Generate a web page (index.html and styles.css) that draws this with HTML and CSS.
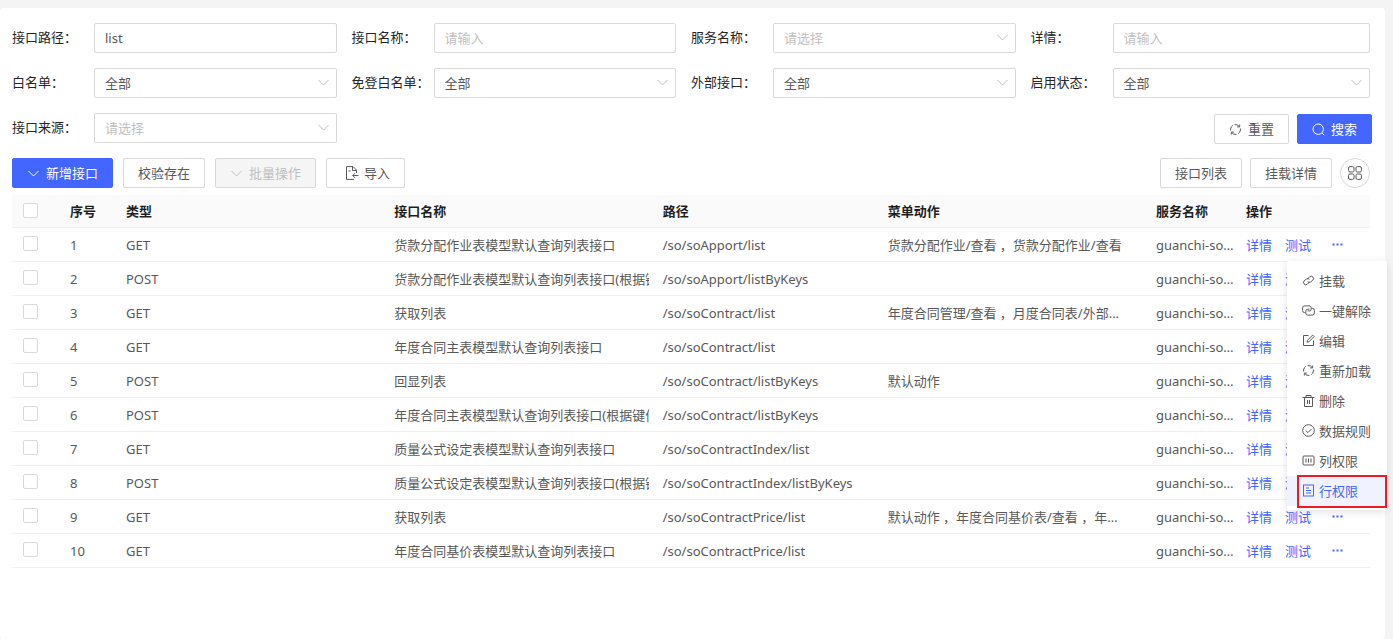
FILE: index.html
```html
<!DOCTYPE html>
<html lang="zh-CN">
  <head>
    <meta charset="UTF-8" />
    <meta name="viewport" content="width=device-width, initial-scale=1.0" />
    <title>接口管理</title>
    <link rel="stylesheet" href="styles.css">
  </head>
  <body>
    <svg class="sprite" aria-hidden="true">
      <symbol id="i-down" viewBox="0 0 13 13"><path d="M1.5 4l5 5 5-5" /></symbol>
      <symbol id="i-reload" viewBox="0 0 13 13"><path d="M1.600 5.800a5 5 0 0 1 2.200-3.400M5.600 1.600a5 5 0 0 1 4.700 1.800M8.200 3.900h2.500V1.500M11.400 7.200a5 5 0 0 1-2.200 3.400M7.400 11.400a5 5 0 0 1-4.700-1.800M4.800 9.100H2.300v2.400M1.600 5.500v2M11.400 5.500v2" /></symbol>
      <symbol id="i-search" viewBox="0 0 13 13"><circle cx="6.2" cy="6.2" r="5.2" /><path d="M10 10l2.3 2.3" /></symbol>
      <symbol id="i-import" viewBox="0 0 14 14"><path d="M9 13.400H1.500V.600h6.500l3.500 3.500v2.900M7.500.800v3.700h3.800M3.500 5h2M13.500 9.500H7.800M10 7.200L7.700 9.500l2.300 2.300" /></symbol>
      <symbol id="i-grid" viewBox="0 0 14 14"><rect x=".6" y=".6" width="5.4" height="5.4" rx="1.4" /><rect x="8" y=".6" width="5.4" height="5.4" rx="1.4" /><rect x=".6" y="8" width="5.4" height="5.4" rx="1.4" /><rect x="8" y="8" width="5.4" height="5.4" rx="1.4" /></symbol>
      <symbol id="i-link" viewBox="0 0 13 13"><path d="M5.4 4.900l2.300-2a2.200 2.200 0 0 1 3.300.2 2.200 2.200 0 0 1-.2 3.100L8.600 8a2.200 2.200 0 0 1-3-.4M7.600 8.100l-2.300 2a2.200 2.200 0 0 1-3.300-.2 2.200 2.200 0 0 1 .2-3.100L4.400 5a2.200 2.200 0 0 1 3 .4" /></symbol>
      <symbol id="i-unlink" viewBox="0 0 13 13"><path d="M3.200 8.600h-.6a2 2 0 0 1-2-2V3.900a2 2 0 0 1 2-2h4.600a2 2 0 0 1 2 2v1.300a1.700 1.700 0 0 1-1.700 1.700H5.600M9.800 4.400h.6a2 2 0 0 1 2 2v2.700a2 2 0 0 1-2 2H5.800a2 2 0 0 1-2-2V7.200a2 2 0 0 1 2-2h1.600" /></symbol>
      <symbol id="i-edit" viewBox="0 0 13 13"><path d="M6.5 1.500H1.500v10h10V6.500M5 8.200l.4-1.900 5.300-5.200 1.400 1.400-5.200 5.300z" /></symbol>
      <symbol id="i-trash" viewBox="0 0 13 13"><path d="M.5 3.500h12M4 3.500v-2h5v2M2.500 3.500v9h8v-9M5.500 6v4M7.500 6v4" /></symbol>
      <symbol id="i-check" viewBox="0 0 13 13"><circle cx="6.5" cy="6.5" r="5.8" /><path d="M3.700 6.500l2.200 2.100 3.800-3.800" /></symbol>
      <symbol id="i-column" viewBox="0 0 13 13"><rect x="1" y="2" width="11" height="9" rx="1" /><path d="M4 4.500v4M6.500 4.500v4M9 4.500v4" /></symbol>
      <symbol id="i-row" viewBox="0 0 13 13"><rect x="1.500" y="1" width="10" height="11" /><path d="M4 4h3M4 6.500h5M4 9h5" /></symbol>
      <symbol id="i-more" viewBox="0 0 13 13"><path d="M1.500 5.500h2v2h-2zM5.500 5.500h2v2h-2zM9.500 5.500h2v2h-2z" /></symbol>
    </svg>

    <main class="page">
      <form class="filters" onsubmit="return false">
        <div class="item">
          <label for="path">接口路径：</label>
          <div class="field"><input id="path" type="text" value="list" /></div>
        </div>
        <div class="item">
          <label for="name">接口名称：</label>
          <div class="field"><input id="name" type="text" placeholder="请输入" /></div>
        </div>
        <div class="item">
          <label for="service">服务名称：</label>
          <div class="field">
            <select id="service" class="empty"><option>请选择</option></select>
            <svg class="arrow"><use href="#i-down" /></svg>
          </div>
        </div>
        <div class="item">
          <label for="detail">详情：</label>
          <div class="field"><input id="detail" type="text" placeholder="请输入" /></div>
        </div>
        <div class="item">
          <label for="white">白名单：</label>
          <div class="field">
            <select id="white"><option>全部</option></select>
            <svg class="arrow"><use href="#i-down" /></svg>
          </div>
        </div>
        <div class="item">
          <label for="free">免登白名单：</label>
          <div class="field">
            <select id="free"><option>全部</option></select>
            <svg class="arrow"><use href="#i-down" /></svg>
          </div>
        </div>
        <div class="item">
          <label for="outer">外部接口：</label>
          <div class="field">
            <select id="outer"><option>全部</option></select>
            <svg class="arrow"><use href="#i-down" /></svg>
          </div>
        </div>
        <div class="item">
          <label for="status">启用状态：</label>
          <div class="field">
            <select id="status"><option>全部</option></select>
            <svg class="arrow"><use href="#i-down" /></svg>
          </div>
        </div>
        <div class="item">
          <label for="source">接口来源：</label>
          <div class="field">
            <select id="source" class="empty"><option>请选择</option></select>
            <svg class="arrow"><use href="#i-down" /></svg>
          </div>
        </div>
        <div class="form-actions">
          <button type="reset" class="btn"><svg><use href="#i-reload" /></svg>重置</button>
          <button type="submit" class="btn primary"><svg><use href="#i-search" /></svg>搜索</button>
        </div>
      </form>

      <div class="toolbar">
        <div class="left">
          <button class="btn primary"><svg><use href="#i-down" /></svg>新增接口</button>
          <button class="btn">校验存在</button>
          <button class="btn" disabled><svg><use href="#i-down" /></svg>批量操作</button>
          <button class="btn import"><svg><use href="#i-import" /></svg>导入</button>
        </div>
        <div class="right">
          <button class="btn">接口列表</button>
          <button class="btn">挂载详情</button>
          <button class="btn round" aria-label="列设置"><svg><use href="#i-grid" /></svg></button>
        </div>
      </div>

      <table class="list">
        <colgroup>
          <col class="c-check" /><col class="c-no" /><col /><col />
          <col class="c-path" /><col /><col class="c-service" /><col class="c-op" />
        </colgroup>
        <thead>
          <tr>
            <th><input type="checkbox" aria-label="全选" /></th>
            <th>序号</th>
            <th>类型</th>
            <th>接口名称</th>
            <th>路径</th>
            <th>菜单动作</th>
            <th>服务名称</th>
            <th>操作</th>
          </tr>
        </thead>
        <tbody id="rows"></tbody>
      </table>
    </main>

    <template id="menu">
      <ul class="menu">
        <li><button><svg><use href="#i-link" /></svg>挂载</button></li>
        <li><button><svg><use href="#i-unlink" /></svg>一键解除</button></li>
        <li><button><svg><use href="#i-edit" /></svg>编辑</button></li>
        <li><button><svg><use href="#i-reload" /></svg>重新加载</button></li>
        <li><button><svg><use href="#i-trash" /></svg>删除</button></li>
        <li><button><svg><use href="#i-check" /></svg>数据规则</button></li>
        <li><button><svg><use href="#i-column" /></svg>列权限</button></li>
        <li class="active"><button><svg><use href="#i-row" /></svg>行权限</button></li>
      </ul>
    </template>

    <script>
      const data = [
        ["GET", "货款分配作业表模型默认查询列表接口", "/so/soApport/list", "货款分配作业/查看 ，货款分配作业/查看"],
        ["POST", "货款分配作业表模型默认查询列表接口(根据键值)", "/so/soApport/listByKeys", ""],
        ["GET", "获取列表", "/so/soContract/list", "年度合同管理/查看 ，月度合同表/外部接口/查看"],
        ["GET", "年度合同主表模型默认查询列表接口", "/so/soContract/list", ""],
        ["POST", "回显列表", "/so/soContract/listByKeys", "默认动作"],
        ["POST", "年度合同主表模型默认查询列表接口(根据键值)", "/so/soContract/listByKeys", ""],
        ["GET", "质量公式设定表模型默认查询列表接口", "/so/soContractIndex/list", ""],
        ["POST", "质量公式设定表模型默认查询列表接口(根据键值)", "/so/soContractIndex/listByKeys", ""],
        ["GET", "获取列表", "/so/soContractPrice/list", "默认动作 ，年度合同基价表/查看 ，年度合同管理"],
        ["GET", "年度合同基价表模型默认查询列表接口", "/so/soContractPrice/list", ""],
      ];

      const rows = document.getElementById("rows");
      rows.innerHTML = data.map(([type, name, path, action], i) => `
        <tr>
          <td><input type="checkbox" aria-label="选择第${i + 1}行" /></td>
          <td>${i + 1}</td>
          <td>${type}</td>
          <td><div class="name">${name}</div></td>
          <td>${path}</td>
          <td class="action">${action}</td>
          <td class="service">guanchi-sonata</td>
          <td class="op">
            <div class="ops">
              <a href="#">详情</a>
              <a href="#">测试</a>
              <button class="more" aria-label="更多"><svg><use href="#i-more" /></svg></button>
            </div>
          </td>
        </tr>`).join("");

      // dropdown of the first row is open
      rows.querySelector(".ops").append(document.getElementById("menu").content.cloneNode(true));
    </script>
  </body>
</html>
```
FILE: styles.css
```css
* {
  box-sizing: border-box;
}
body {
  margin: 0;
  padding: 8px 8px 0 0;
  background: #f4f4f4;
  color: #595959;
  font-family: "Noto Sans", "Noto Sans CJK SC", sans-serif;
  font-size: 13px;
  line-height: 20px;
}
input,
select,
button {
  font: inherit;
  color: inherit;
}
svg {
  width: 13px;
  height: 13px;
  fill: none;
  stroke: currentColor;
  flex: none;
}
.sprite {
  display: none;
}
.page {
  min-height: calc(100vh - 8px);
  padding: 15px 15px 0 12px;
  background: #fff;
  border-radius: 4px;
}

/* filters */
.filters {
  display: grid;
  grid-template-columns: repeat(4, 1fr);
  row-gap: 15px;
}
.item {
  display: flex;
  padding-right: 15px;
}
.item:nth-child(4n) {
  padding-right: 0;
}
.item label {
  width: 82px;
  line-height: 28px;
  color: #262626;
  white-space: nowrap;
}
.field {
  position: relative;
  flex: 1;
}
.field input,
.field select {
  display: block;
  width: 100%;
  height: 30px;
  padding: 0 10px;
  border: 1px solid #d9d9d9;
  border-radius: 2px;
  background: #fff;
  appearance: none;
  outline: none;
}
.field .empty,
.field input::placeholder {
  color: #bfbfbf;
}
.arrow {
  position: absolute;
  top: 8px;
  right: 7px;
  color: #bfbfbf;
  pointer-events: none;
}
.form-actions {
  grid-column: 2 / -1;
  display: flex;
  justify-content: flex-end;
  gap: 8px;
  margin-right: -2px;
  padding-top: 1px;
}

/* buttons */
.btn {
  display: inline-flex;
  align-items: center;
  justify-content: center;
  gap: 6px;
  height: 30px;
  padding: 0 14px;
  border: 1px solid #d9d9d9;
  border-radius: 2px;
  background: #fff;
  white-space: nowrap;
  cursor: pointer;
}
.btn.primary {
  border-color: #4266ff;
  background: #4266ff;
  color: #fff;
}
.btn:disabled {
  background: #f5f5f5;
  color: #bfbfbf;
  cursor: not-allowed;
}
.btn.import {
  gap: 5px;
  padding-left: 18px;
}
.btn.import svg,
.btn.round svg {
  width: 14px;
  height: 14px;
}
.btn.round {
  width: 30px;
  padding: 0;
  border-radius: 50%;
}
.toolbar {
  display: flex;
  justify-content: space-between;
  margin: 14px 0 7px;
}
.left,
.right {
  display: flex;
  gap: 10px;
}
.right {
  gap: 8px;
}

/* table */
.list {
  width: 100%;
  table-layout: fixed;
  border-collapse: separate;
  border-spacing: 0;
}
.c-check {
  width: 50px;
}
.c-no {
  width: 56px;
}
.c-path {
  width: 225px;
}
.c-service {
  width: 90px;
}
.c-op {
  width: 132px;
}
.list th,
.list td {
  height: 34px;
  padding: 0 6px 0 8px;
  border-bottom: 1px solid #f0f0f0;
  text-align: left;
  white-space: nowrap;
  overflow: hidden;
  text-overflow: ellipsis;
}
.list th {
  height: 33px;
  background: #fafafa;
  color: #1f1f1f;
  font-weight: 600;
}
.list .name {
  overflow: hidden;
}
.list .action {
  padding-right: 20px;
}
.list .service {
  padding-right: 0;
}
.list .op {
  overflow: visible;
}
.list input {
  display: block;
  width: 15px;
  height: 15px;
  margin: 0 0 2px 3px;
  border: 1px solid #d9d9d9;
  border-radius: 2px;
  background: #fff;
  appearance: none;
}
.ops {
  position: relative;
  display: flex;
  align-items: center;
  gap: 13px;
}
.ops a {
  color: #4266ff;
  text-decoration: none;
}
.more {
  display: flex;
  margin-left: 7px;
  padding: 0;
  border: 0;
  background: none;
  color: #4266ff;
  cursor: pointer;
}
.more svg {
  fill: currentColor;
  stroke: none;
}

/* row dropdown */
.menu {
  position: absolute;
  top: 26px;
  right: -23px;
  z-index: 10;
  width: 100px;
  margin: 0;
  padding: 5px 0 4px;
  border-radius: 2px;
  background: #fff;
  box-shadow: 0 2px 8px rgba(0, 0, 0, 0.12);
  list-style: none;
}
.menu li {
  position: relative;
}
.menu button {
  display: flex;
  align-items: center;
  gap: 4px;
  width: 100%;
  height: 30px;
  padding: 0 0 0 15px;
  border: 0;
  background: none;
  white-space: nowrap;
  cursor: pointer;
}
.menu .active button {
  background: #f0f3ff;
  color: #4266ff;
}
.menu .active::after {
  content: "";
  position: absolute;
  inset: -1px 0 -2px 10px;
  border: 2px solid #ed1c24;
}
```
